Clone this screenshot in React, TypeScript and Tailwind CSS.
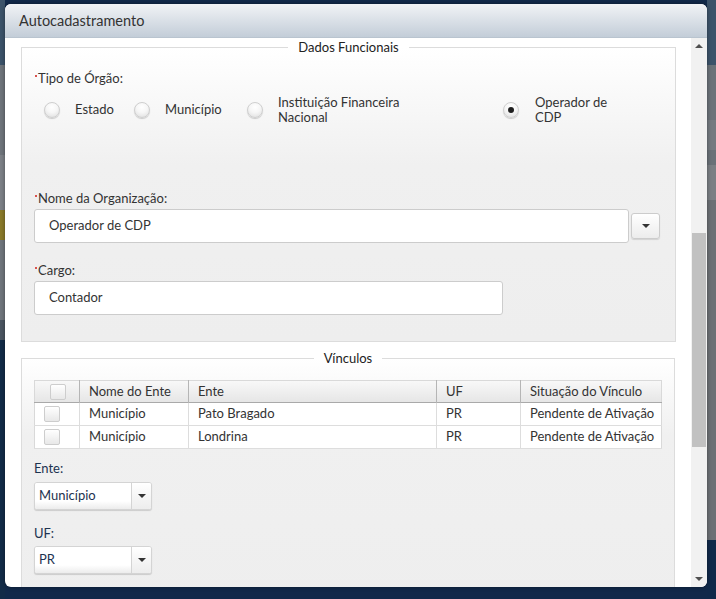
import React from "react";

const Dot = () => (
  <span className="inline-block w-[2px] h-[2px] bg-[#d9534f] mr-[1px] align-top mt-[7px]" />
);

const Radio = ({ checked }: { checked?: boolean }) => (
  <span className="relative inline-block w-[16px] h-[16px] shrink-0 rounded-full border border-[#cfcfcf] bg-[radial-gradient(circle_at_50%_30%,#ffffff_0%,#f6f6f6_45%,#dcdcdc_100%)] shadow-[0_1px_1px_rgba(0,0,0,0.18)]">
    {checked && (
      <span className="absolute left-[4px] top-[4px] w-[6px] h-[6px] rounded-full bg-[#1e1e1e]" />
    )}
  </span>
);

const Tri = () => (
  <span className="inline-block w-0 h-0 border-l-[4px] border-r-[4px] border-t-[4px] border-l-transparent border-r-transparent border-t-[#333]" />
);

const Check = () => (
  <span className="inline-block w-[16px] h-[16px] rounded-[2px] border border-[#cdcdcd] bg-gradient-to-b from-white to-[#e8e8e8]" />
);

const Select = ({ value }: { value: string }) => (
  <div className="flex w-[118px] h-[28px] rounded-[3px] border border-[#d4d4d4] bg-white shadow-[0_1px_1px_rgba(0,0,0,0.15)] overflow-hidden">
    <div className="flex-1 flex items-center pl-[4px] text-[#1d3350] bg-gradient-to-b from-white from-70% to-[#ececec]">
      {value}
    </div>
    <div className="w-[20px] flex items-center justify-center border-l border-[#d4d4d4] bg-gradient-to-b from-white to-[#ededed]">
      <Tri />
    </div>
  </div>
);

const Band = ({ h, c, children }: { h: string; c: string; children?: React.ReactNode }) => (
  <div className={`${h} ${c} relative overflow-hidden`}>{children}</div>
);

export default function App() {
  return (
    <div
      className="relative w-[716px] h-[599px] overflow-hidden bg-[#11294a] text-[13px] text-[#333]"
      style={{ fontFamily: "Lato, 'Open Sans', 'Liberation Sans', sans-serif" }}
    >
      {/* background page behind overlay */}
      <div className="flex w-full h-full">
        <div className="w-[5px] flex flex-col">
          <Band h="h-[65px]" c="bg-[#3c536a]" />
          <Band h="h-[90px]" c="bg-[#6e747b]" />
          <Band h="h-[55px]" c="bg-[#7c8086]" />
          <Band h="h-[30px]" c="bg-[#8a7a2a]" />
          <Band h="h-[80px]" c="bg-[#6f757c]" />
          <Band h="h-[20px]" c="bg-[#4a5560]" />
          <div className="flex-1 bg-[#122b48]" />
        </div>
        <div className="flex-1 bg-[#11294a]" />
        <div className="w-[9px] flex flex-col">
          <Band h="h-[65px]" c="bg-[#3c536a]" />
          <Band h="h-[55px]" c="bg-[#6b7279]" />
          <Band h="h-[30px]" c="bg-[#747a80]" />
          <Band h="h-[15px]" c="bg-[#6a7178]" />
          <Band h="h-[35px]" c="bg-[#7b7f84]" />
          <Band h="h-[340px]" c="bg-[#6c7075]" />
          <div className="flex-1 bg-[#10294a]" />
        </div>
      </div>

      {/* modal */}
      <div className="absolute left-[5px] top-[4px] w-[702px] h-[583px] rounded-[6px] bg-white overflow-hidden flex flex-col shadow-[0_0_4px_rgba(0,0,0,0.4)]">
        <div className="h-[34px] shrink-0 flex items-center pl-[14px] text-[14.5px] text-[#333] bg-gradient-to-b from-[#f1f3f6] to-[#c3cdd8] border-b border-[#b9c4cf]">
          Autocadastramento
        </div>
        <div className="flex flex-1 min-h-0">
          <div className="w-[686px] pl-[16px] overflow-hidden">
            {/* Dados Funcionais */}
            <fieldset className="w-[655px] border border-[#dcdcdc] bg-gradient-to-b from-white via-[#f0f0f0] via-40% to-[#eeeeee]">
              <legend className="mx-auto px-[10px] leading-[18px] text-[13px] text-[#222]">
                Dados Funcionais
              </legend>
              <div className="pl-[12px] pt-[12px] pb-[26px]">
                <div className="leading-[20px] pl-[1px]">
                  <Dot />
                  Tipo de Órgão:
                </div>
                <div className="mt-[7px] h-[30px] flex items-center pl-[10px]">
                  <div className="w-[90px] flex items-center">
                    <Radio />
                    <span className="ml-[15px]">Estado</span>
                  </div>
                  <div className="w-[113px] flex items-center">
                    <Radio />
                    <span className="ml-[15px]">Município</span>
                  </div>
                  <div className="w-[256px] flex items-center">
                    <Radio />
                    <span className="ml-[15px] w-[140px] leading-[15px]">
                      Instituição Financeira Nacional
                    </span>
                  </div>
                  <div className="flex items-center">
                    <Radio checked />
                    <span className="ml-[16px] w-[80px] leading-[15px]">Operador de CDP</span>
                  </div>
                </div>
                <div className="mt-[63px] leading-[20px] pl-[1px]">
                  <Dot />
                  Nome da Organização:
                </div>
                <div className="mt-[1px] flex items-center">
                  <div className="w-[595px] h-[34px] flex items-center pl-[14px] bg-white border border-[#cccccc] rounded-[3px]">
                    Operador de CDP
                  </div>
                  <div className="ml-[2px] w-[29px] h-[26px] flex items-center justify-center rounded-[3px] border border-[#cccccc] bg-gradient-to-b from-white to-[#ececec] shadow-[0_1px_1px_rgba(0,0,0,0.12)]">
                    <Tri />
                  </div>
                </div>
                <div className="mt-[17px] leading-[20px] pl-[1px]">
                  <Dot />
                  Cargo:
                </div>
                <div className="mt-[1px] w-[469px] h-[34px] flex items-center pl-[14px] bg-white border border-[#cccccc] rounded-[3px]">
                  Contador
                </div>
              </div>
            </fieldset>

            {/* Vínculos */}
            <fieldset className="mt-[7px] w-[654px] border border-[#dcdcdc] bg-gradient-to-b from-white via-[#f0f0f0] via-30% to-[#eeeeee]">
              <legend className="mx-auto px-[10px] leading-[18px] text-[13px] text-[#222]">
                Vínculos
              </legend>
              <div className="pl-[12px] pt-[13px] pb-[40px]">
                <table className="table-fixed w-[627px] border-collapse border border-[#d9d9d9] bg-white whitespace-nowrap">
                  <colgroup>
                    <col className="w-[45px]" />
                    <col className="w-[109px]" />
                    <col className="w-[248px]" />
                    <col className="w-[84px]" />
                    <col className="w-[141px]" />
                  </colgroup>
                  <thead>
                    <tr className="h-[22px] bg-gradient-to-b from-[#f8f8f8] to-[#e6e6e6] border-b border-[#a9a9a9]">
                      <th className="p-0 border-r border-[#b5b5b5]">
                        <div className="flex justify-center pl-[1px]">
                          <Check />
                        </div>
                      </th>
                      <th className="p-0 pl-[9px] text-left font-normal border-r border-[#b5b5b5]">Nome do Ente</th>
                      <th className="p-0 pl-[9px] text-left font-normal border-r border-[#b5b5b5]">Ente</th>
                      <th className="p-0 pl-[9px] text-left font-normal border-r border-[#b5b5b5]">UF</th>
                      <th className="p-0 pl-[9px] text-left font-normal overflow-hidden">Situação do Vínculo</th>
                    </tr>
                  </thead>
                  <tbody>
                    {[
                      ["Município", "Pato Bragado", "PR", "Pendente de Ativação"],
                      ["Município", "Londrina", "PR", "Pendente de Ativação"],
                    ].map((r, i) => (
                      <tr key={i} className="h-[23px] border-b border-[#dddddd]">
                        <td className="p-0 border-r border-[#dddddd]">
                          <div className="flex pl-[9px]">
                            <Check />
                          </div>
                        </td>
                        <td className="p-0 pl-[9px] border-r border-[#dddddd]">{r[0]}</td>
                        <td className="p-0 pl-[9px] border-r border-[#dddddd]">{r[1]}</td>
                        <td className="p-0 pl-[9px] border-r border-[#dddddd]">{r[2]}</td>
                        <td className="p-0 pl-[9px] overflow-hidden">{r[3]}</td>
                      </tr>
                    ))}
                  </tbody>
                </table>
                <div className="mt-[9px] leading-[20px] text-[#1d3350]">Ente:</div>
                <div className="mt-[4px]">
                  <Select value="Município" />
                </div>
                <div className="mt-[13px] leading-[20px] text-[#1d3350]">UF:</div>
                <div className="mt-[3px]">
                  <Select value="PR" />
                </div>
              </div>
            </fieldset>
          </div>

          {/* scrollbar */}
          <div className="w-[16px] shrink-0 bg-[#f1f1f1] flex flex-col items-center">
            <div className="h-[16px] flex items-center justify-center">
              <span className="inline-block w-0 h-0 border-l-[4px] border-r-[4px] border-b-[4px] border-l-transparent border-r-transparent border-b-[#505050]" />
            </div>
            <div className="flex-1 w-full px-[1px] pt-[179px] pb-[124px]">
              <div className="h-full bg-[#c1c1c1]" />
            </div>
            <div className="h-[16px] flex items-center justify-center">
              <span className="inline-block w-0 h-0 border-l-[4px] border-r-[4px] border-t-[4px] border-l-transparent border-r-transparent border-t-[#505050]" />
            </div>
          </div>
        </div>
      </div>
    </div>
  );
}
